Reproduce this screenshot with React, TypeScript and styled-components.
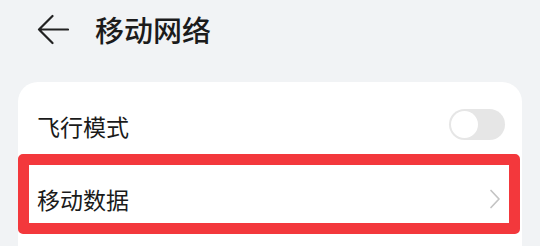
import styled, { createGlobalStyle } from "styled-components";

const GlobalStyle = createGlobalStyle`
  html, body {
    margin: 0;
    padding: 0;
    background: #f1f3f5;
    font-family: "Noto Sans CJK SC", "Noto Sans", sans-serif;
  }
`;

export const Page = styled.div`
  width: 540px;
  height: 246px;
  overflow: hidden;
  background: #f1f3f5;
  display: flex;
  flex-direction: column;
`;

export const Header = styled.div`
  display: flex;
  align-items: center;
  height: 58px;
  padding: 0 0 0 37px;
  gap: 26px;
`;

export const BackButton = styled.div`
  display: flex;
  width: 32px;
  height: 32px;
  cursor: pointer;
`;

export const Title = styled.h1`
  margin: 0;
  color: #1b1b1b;
  font-size: 29px;
  font-weight: 500;
  line-height: 40px;
`;

export const Card = styled.div`
  margin: 24px 18px 0 18px;
  padding-top: 6px;
  background: #fff;
  border-radius: 20px 20px 0 0;
  flex: 1;
  display: flex;
  flex-direction: column;
`;

export const Row = styled.div<{ $highlight?: boolean }>`
  position: relative;
  display: flex;
  align-items: center;
  justify-content: space-between;
  height: 73px;
  padding: 0 17px 0 19px;
  box-sizing: border-box;
  cursor: pointer;
`;

export const Label = styled.span<{ $offset?: number }>`
  color: #1a1a1a;
  font-size: 23px;
  font-weight: 400;
  line-height: 32px;
  margin-top: ${(p) => p.$offset ?? 0}px;
`;

export const Highlight = styled.div`
  position: absolute;
  top: -7px;
  left: 0;
  right: 2px;
  bottom: 0;
  border: 11px solid #f3383c;
  border-radius: 5px;
  pointer-events: none;
`;

export const Toggle = styled.div<{ $on?: boolean }>`
  position: relative;
  width: 56px;
  height: 31px;
  border-radius: 16px;
  background: ${(p) => (p.$on ? "#0a59f7" : "#e6e6e6")};
`;

export const Knob = styled.div<{ $on?: boolean }>`
  position: absolute;
  top: 2px;
  left: ${(p) => (p.$on ? "27px" : "2px")};
  width: 27px;
  height: 27px;
  border-radius: 50%;
  background: #fff;
`;

export const Chevron = styled.div`
  display: flex;
  margin-right: 4px;
  margin-top: 2px;
`;

export default function App() {
  return (
    <>
      <GlobalStyle />
      <Page>
        <Header>
          <BackButton>
            <svg width="32" height="32" viewBox="0 0 32 32" fill="none">
              <path
                d="M31 16.5H2M15.5 3L2 16.5L15.5 30"
                stroke="#222"
                strokeWidth="2.2"
                strokeLinecap="round"
                strokeLinejoin="round"
              />
            </svg>
          </BackButton>
          <Title>移动网络</Title>
        </Header>
        <Card>
          <Row>
            <Label $offset={2}>飞行模式</Label>
            <Toggle>
              <Knob />
            </Toggle>
          </Row>
          <Row $highlight>
            <Label $offset={2}>移动数据</Label>
            <Chevron>
              <svg width="12" height="20" viewBox="0 0 12 20" fill="none">
                <path
                  d="M2 1.5L10 10L2 18.5"
                  stroke="#c4c4c4"
                  strokeWidth="1.7"
                  strokeLinecap="round"
                  strokeLinejoin="round"
                />
              </svg>
            </Chevron>
            <Highlight />
          </Row>
        </Card>
      </Page>
    </>
  );
}
